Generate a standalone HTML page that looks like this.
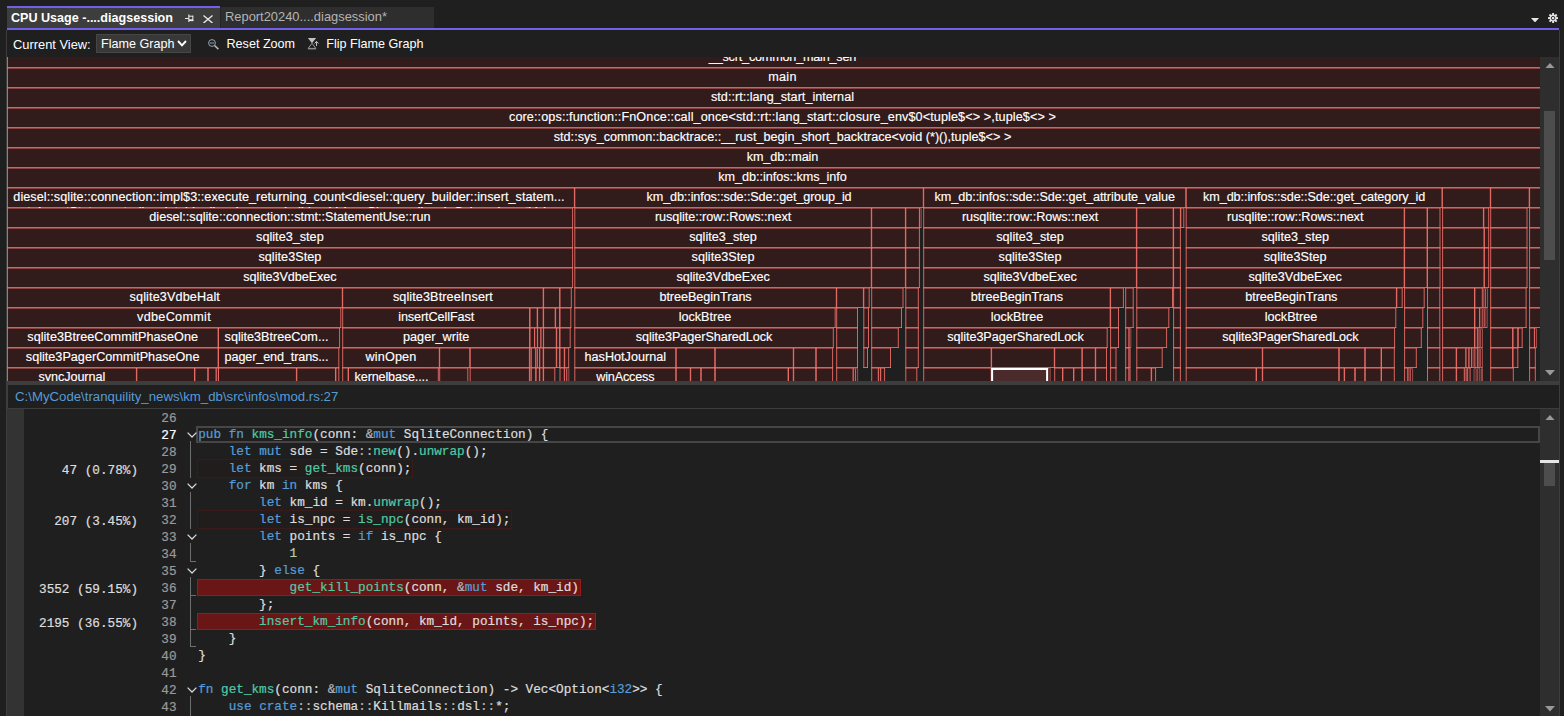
<!DOCTYPE html>
<html><head><meta charset="utf-8"><title>CPU Usage</title>
<style>
html,body{margin:0;padding:0;background:#1f1f1f;}
body{width:1564px;height:716px;overflow:hidden;position:relative;font-family:"Liberation Sans",sans-serif;color:#fff;}
.abs{position:absolute}
#tabA{left:7px;top:6px;width:213px;height:22px;background:#3d3d3d;border-top:2px solid #7160e8;box-sizing:border-box;}
#tabA span{position:absolute;left:4px;top:2.7px;font-weight:bold;font-size:12.57px;color:#fff;white-space:nowrap}
#tabB{left:220px;top:7px;width:214px;height:21px;background:#2e2e2e;border-left:1px solid #252525;box-sizing:border-box}
#tabB span{position:absolute;left:4px;top:2px;font-size:12.9px;color:#b4b4b4;white-space:nowrap}
#purple{left:7px;top:28px;width:1552px;height:2px;background:#7160e8}
#lborder{left:6px;top:30px;width:1px;height:686px;background:#3d3d3d}
#rborder{left:1559px;top:30px;width:1px;height:686px;background:#3d3d3d}
.tb{position:absolute;top:37.2px;font-size:12.6px;color:#fff;white-space:nowrap;line-height:15px}
#combo{left:96px;top:34px;width:95px;height:19px;background:#383838;border:1px solid #464646;box-sizing:border-box}
#flamewrap{left:7px;top:57px;width:1533px;height:324px;overflow:hidden;background:#1f1f1f}
.flame{position:absolute;left:0;top:0}
.fl{-webkit-text-stroke:0.15px #fff;position:absolute;height:20px;line-height:18px;font-size:12.65px;color:#fff;text-align:center;white-space:nowrap;overflow:hidden}
.fl.tr{text-align:left;padding-left:6.3px;box-sizing:border-box}
.sbar{background:#2e2e2e}
.thumb{background:#4d4d4d}
#split{left:7px;top:381px;width:1552px;height:4px;background:#3d3d3d}
#pathbar{left:7px;top:385px;width:1552px;height:24px;background:#1f1f1f;border-bottom:1px solid #3d3d3d;border-left:1px solid #3d3d3d;box-sizing:border-box}
#pathbar span{position:absolute;left:7px;top:4px;font-size:13.22px;color:#569cd6;white-space:nowrap}
#margin{left:7px;top:409px;width:17px;height:307px;background:#333333}
.mono{font-family:"Liberation Mono",monospace;font-size:12.7px;}
.ln,.cd,.mt{-webkit-text-stroke-width:0.22px;position:absolute;margin-top:0.6px;height:17px;line-height:17px;white-space:pre;font-family:"Liberation Mono",monospace;font-size:12.7px}
.ln{left:140px;width:36.5px;text-align:right;color:#9a9a9a}
.ln.cur{color:#fff}
.cd{left:198.2px;color:#dcdcdc;margin-top:-0.4px}
.mt{margin-top:1.5px;left:20px;width:118px;text-align:right;color:#dcdcdc}
.k{color:#569cd6} .f{color:#4ec9a4} .g{color:#b4b4b4} .n{color:#b5cea8}
.hl1,.hl2{position:absolute;left:197px;height:17px;box-sizing:border-box}
.hl1{background:#221d1d;border:1.7px solid #3b1a1a;margin-top:-0.7px;height:18.4px;margin-left:0.3px}
.hl2{background:#6b1616;border:1px solid #9c1717}
#curline{left:196px;top:426px;width:1344px;height:17px;border:2px solid #464646;box-sizing:border-box}
.chev{position:absolute;left:186.5px;width:10px;height:6px;line-height:0}
.vl{position:absolute;left:190px;width:1px;background:#6e6e6e}
.hl{position:absolute;left:190px;width:6px;height:1px;background:#6e6e6e}
</style></head><body>
<div id="tabA" class="abs"><span>CPU Usage -....diagsession</span>
<svg class="abs" style="left:177px;top:6px" width="11" height="9" viewBox="184 14 11 9"><g fill="#ececec"><rect x="185" y="18" width="3.5" height="1"/><rect x="188.3" y="14.5" width="1.1" height="7.5"/><rect x="189" y="15.7" width="4.3" height="1"/><rect x="192.3" y="15.7" width="1" height="5.4"/><rect x="189" y="19.3" width="4.3" height="1.8"/></g></svg>
<svg class="abs" style="left:196px;top:6.5px" width="10" height="8.6" viewBox="0 0 10 8.6"><path d="M0.5 0.5 L9.5 8.1 M9.5 0.5 L0.5 8.1" fill="none" stroke="#ececec" stroke-width="1.25"/></svg>
</div>
<div id="tabB" class="abs"><span>Report20240....diagsession*</span></div>
<svg class="abs" style="left:1531px;top:17.8px" width="8" height="4.5" viewBox="0 0 8 4.5"><path d="M0 0 H8 L4 4.5 Z" fill="#e6e6e6"/></svg>
<svg class="abs" style="left:1548px;top:13px" width="10.2" height="10.2" viewBox="-5.1 -5.1 10.2 10.2"><g fill="#e6e6e6"><circle r="3.5"/><rect x="-0.95" y="-5.1" width="1.9" height="2.6" transform="rotate(0)"/><rect x="-0.95" y="-5.1" width="1.9" height="2.6" transform="rotate(45)"/><rect x="-0.95" y="-5.1" width="1.9" height="2.6" transform="rotate(90)"/><rect x="-0.95" y="-5.1" width="1.9" height="2.6" transform="rotate(135)"/><rect x="-0.95" y="-5.1" width="1.9" height="2.6" transform="rotate(180)"/><rect x="-0.95" y="-5.1" width="1.9" height="2.6" transform="rotate(225)"/><rect x="-0.95" y="-5.1" width="1.9" height="2.6" transform="rotate(270)"/><rect x="-0.95" y="-5.1" width="1.9" height="2.6" transform="rotate(315)"/></g><circle r="1.75" fill="none" stroke="#1f1f1f" stroke-width="0.9"/></svg>
<div id="purple" class="abs"></div>
<div id="lborder" class="abs"></div>
<div id="rborder" class="abs"></div>
<div class="tb" style="left:13px;font-size:12.87px">Current View:</div>
<div id="combo" class="abs"><span class="tb" style="left:4px;top:2.2px">Flame Graph</span>
<svg class="abs" style="left:80px;top:5px" width="10" height="7" viewBox="0 0 10 7"><path d="M1 1 L5 5.3 L9 1" fill="none" stroke="#fff" stroke-width="1.9"/></svg></div>
<svg class="abs" style="left:207.2px;top:37.6px" width="13" height="13" viewBox="0 0 13 13"><circle cx="5" cy="5" r="3.4" fill="none" stroke="#a8a8a8" stroke-width="0.95"/><path d="M7.5 7.5 L11.4 11.2" stroke="#b4b4b4" stroke-width="1.6"/><path d="M2.9 5 H7.1" stroke="#5aa0e0" stroke-width="1.1"/></svg>
<div class="tb" style="left:226.5px">Reset Zoom</div>
<svg class="abs" style="left:307px;top:37px" width="13" height="13" viewBox="0 0 13 13"><path d="M0.9 0.9 H9.1 L5 6.2 Z" fill="#c2c2c2"/><path d="M5 6.3 L1.3 11.2 M5 6.3 L8.7 11.2" fill="none" stroke="#9c9c9c" stroke-width="1"/><rect x="0.9" y="10.9" width="8.2" height="1.5" fill="#8c8c8c"/><path d="M9.5 9 V4.5 M7.6 6.5 L9.5 4.4 L11.5 6.5" fill="none" stroke="#c2c2c2" stroke-width="1"/></svg>
<div class="tb" style="left:326.3px">Flip Flame Graph</div>

<div id="flamewrap" class="abs">
<svg class="flame" width="1533" height="324" viewBox="7 57 1533 324">
<rect x="0" y="0" width="1600" height="800" fill="#1f1f1f"/>
<g fill="#321b1b" stroke="none"><rect x="7.00" y="48" width="1551.30" height="20"/><rect x="7.00" y="68" width="1551.30" height="20"/><rect x="7.00" y="88" width="1551.30" height="20"/><rect x="7.00" y="108" width="1551.30" height="20"/><rect x="7.00" y="128" width="1551.30" height="20"/><rect x="7.00" y="148" width="1551.30" height="20"/><rect x="7.00" y="168" width="1551.30" height="20"/><rect x="7.00" y="188" width="567.90" height="20"/><rect x="574.30" y="188" width="349.50" height="20"/><rect x="923.20" y="188" width="263.10" height="20"/><rect x="1185.70" y="188" width="256.80" height="20"/><rect x="1441.90" y="188" width="48.90" height="20"/><rect x="1490.20" y="188" width="39.50" height="20"/><rect x="1529.10" y="188" width="29.20" height="20"/><rect x="7.00" y="208" width="566.10" height="20"/><rect x="574.30" y="208" width="297.50" height="20"/><rect x="871.20" y="208" width="34.70" height="20"/><rect x="905.30" y="208" width="14.60" height="20"/><rect x="923.20" y="208" width="213.70" height="20"/><rect x="1136.30" y="208" width="37.40" height="20"/><rect x="1173.10" y="208" width="7.80" height="20"/><rect x="1185.70" y="208" width="219.00" height="20"/><rect x="1404.10" y="208" width="23.50" height="20"/><rect x="1427.00" y="208" width="13.50" height="20"/><rect x="1442.10" y="208" width="41.80" height="20"/><rect x="1483.30" y="208" width="5.90" height="20"/><rect x="1490.20" y="208" width="37.30" height="20"/><rect x="1529.10" y="208" width="29.20" height="20"/><rect x="7.00" y="228" width="566.10" height="20"/><rect x="574.30" y="228" width="297.50" height="20"/><rect x="871.20" y="228" width="34.70" height="20"/><rect x="905.30" y="228" width="14.60" height="20"/><rect x="923.20" y="228" width="213.70" height="20"/><rect x="1136.30" y="228" width="37.40" height="20"/><rect x="1173.10" y="228" width="7.80" height="20"/><rect x="1185.70" y="228" width="219.00" height="20"/><rect x="1404.10" y="228" width="23.50" height="20"/><rect x="1427.00" y="228" width="13.50" height="20"/><rect x="1442.10" y="228" width="42.40" height="20"/><rect x="1483.90" y="228" width="5.30" height="20"/><rect x="1490.20" y="228" width="37.30" height="20"/><rect x="1529.10" y="228" width="29.20" height="20"/><rect x="7.00" y="248" width="566.10" height="20"/><rect x="574.30" y="248" width="297.50" height="20"/><rect x="871.20" y="248" width="34.70" height="20"/><rect x="905.30" y="248" width="14.60" height="20"/><rect x="923.20" y="248" width="213.70" height="20"/><rect x="1136.30" y="248" width="37.40" height="20"/><rect x="1173.10" y="248" width="7.80" height="20"/><rect x="1185.70" y="248" width="219.00" height="20"/><rect x="1404.10" y="248" width="23.50" height="20"/><rect x="1427.00" y="248" width="13.50" height="20"/><rect x="1442.10" y="248" width="42.40" height="20"/><rect x="1483.90" y="248" width="5.30" height="20"/><rect x="1490.20" y="248" width="37.30" height="20"/><rect x="1529.10" y="248" width="29.20" height="20"/><rect x="7.00" y="268" width="566.10" height="20"/><rect x="574.30" y="268" width="297.50" height="20"/><rect x="871.20" y="268" width="34.70" height="20"/><rect x="905.30" y="268" width="14.60" height="20"/><rect x="923.20" y="268" width="213.70" height="20"/><rect x="1136.30" y="268" width="37.40" height="20"/><rect x="1173.10" y="268" width="7.80" height="20"/><rect x="1185.70" y="268" width="219.00" height="20"/><rect x="1404.10" y="268" width="23.50" height="20"/><rect x="1427.00" y="268" width="13.50" height="20"/><rect x="1442.10" y="268" width="42.40" height="20"/><rect x="1483.90" y="268" width="5.30" height="20"/><rect x="1490.20" y="268" width="37.30" height="20"/><rect x="1529.10" y="268" width="29.20" height="20"/><rect x="919.30" y="208" width="2.20" height="20"/><rect x="1180.30" y="208" width="4.00" height="20"/><rect x="7.00" y="288" width="335.80" height="20"/><rect x="342.20" y="288" width="201.50" height="20"/><rect x="543.10" y="288" width="17.00" height="20"/><rect x="559.50" y="288" width="12.30" height="20"/><rect x="574.30" y="288" width="262.50" height="20"/><rect x="836.20" y="288" width="27.70" height="20"/><rect x="863.30" y="288" width="6.40" height="20"/><rect x="871.20" y="288" width="32.30" height="20"/><rect x="905.30" y="288" width="13.50" height="20"/><rect x="923.20" y="288" width="187.50" height="20"/><rect x="1110.10" y="288" width="13.80" height="20"/><rect x="1125.20" y="288" width="8.50" height="20"/><rect x="1136.30" y="288" width="36.70" height="20"/><rect x="1173.10" y="288" width="7.80" height="20"/><rect x="1185.70" y="288" width="211.20" height="20"/><rect x="1396.30" y="288" width="6.40" height="20"/><rect x="1404.10" y="288" width="20.60" height="20"/><rect x="1427.00" y="288" width="13.30" height="20"/><rect x="1442.10" y="288" width="32.90" height="20"/><rect x="1474.40" y="288" width="8.40" height="20"/><rect x="1483.00" y="288" width="2.50" height="20"/><rect x="1485.10" y="288" width="2.80" height="20"/><rect x="1490.20" y="288" width="36.40" height="20"/><rect x="1529.10" y="288" width="29.20" height="20"/><rect x="7.00" y="308" width="334.30" height="20"/><rect x="342.20" y="308" width="187.90" height="20"/><rect x="529.50" y="308" width="8.20" height="20"/><rect x="537.10" y="308" width="6.60" height="20"/><rect x="543.10" y="308" width="12.60" height="20"/><rect x="555.10" y="308" width="5.00" height="20"/><rect x="559.50" y="308" width="11.80" height="20"/><rect x="574.30" y="308" width="261.40" height="20"/><rect x="836.20" y="308" width="21.80" height="20"/><rect x="863.30" y="308" width="5.70" height="20"/><rect x="871.20" y="308" width="30.80" height="20"/><rect x="905.30" y="308" width="13.50" height="20"/><rect x="923.20" y="308" width="187.50" height="20"/><rect x="1110.10" y="308" width="8.90" height="20"/><rect x="1125.20" y="308" width="8.50" height="20"/><rect x="1136.30" y="308" width="33.00" height="20"/><rect x="1173.10" y="308" width="7.80" height="20"/><rect x="1185.70" y="308" width="210.60" height="20"/><rect x="1404.10" y="308" width="19.20" height="20"/><rect x="1427.00" y="308" width="13.30" height="20"/><rect x="1442.10" y="308" width="32.90" height="20"/><rect x="1474.40" y="308" width="5.70" height="20"/><rect x="1479.50" y="308" width="3.00" height="20"/><rect x="1482.50" y="308" width="2.20" height="20"/><rect x="1484.70" y="308" width="2.80" height="20"/><rect x="1490.20" y="308" width="36.40" height="20"/><rect x="1529.10" y="308" width="29.20" height="20"/><rect x="7.00" y="328" width="211.60" height="20"/><rect x="218.00" y="328" width="122.10" height="20"/><rect x="342.20" y="328" width="187.90" height="20"/><rect x="529.50" y="328" width="5.50" height="20"/><rect x="534.40" y="328" width="3.30" height="20"/><rect x="537.10" y="328" width="4.20" height="20"/><rect x="540.70" y="328" width="3.00" height="20"/><rect x="543.10" y="328" width="13.70" height="20"/><rect x="556.20" y="328" width="3.90" height="20"/><rect x="559.50" y="328" width="11.20" height="20"/><rect x="574.30" y="328" width="259.50" height="20"/><rect x="836.20" y="328" width="21.80" height="20"/><rect x="863.30" y="328" width="5.70" height="20"/><rect x="871.20" y="328" width="27.60" height="20"/><rect x="905.30" y="328" width="13.50" height="20"/><rect x="923.20" y="328" width="184.50" height="20"/><rect x="1110.10" y="328" width="8.90" height="20"/><rect x="1125.20" y="328" width="4.20" height="20"/><rect x="1128.80" y="328" width="2.40" height="20"/><rect x="1136.30" y="328" width="30.80" height="20"/><rect x="1173.10" y="328" width="7.80" height="20"/><rect x="1185.70" y="328" width="209.40" height="20"/><rect x="1404.10" y="328" width="17.70" height="20"/><rect x="1427.00" y="328" width="13.30" height="20"/><rect x="1442.10" y="328" width="32.90" height="20"/><rect x="1474.40" y="328" width="3.50" height="20"/><rect x="1477.90" y="328" width="2.20" height="20"/><rect x="1480.30" y="328" width="2.50" height="20"/><rect x="1490.20" y="328" width="22.90" height="20"/><rect x="1512.50" y="328" width="5.80" height="20"/><rect x="1517.70" y="328" width="5.00" height="20"/><rect x="1529.10" y="328" width="5.80" height="20"/><rect x="1534.30" y="328" width="2.60" height="20"/><rect x="7.00" y="348" width="211.60" height="20"/><rect x="218.00" y="348" width="121.30" height="20"/><rect x="342.20" y="348" width="97.60" height="20"/><rect x="439.20" y="348" width="31.10" height="20"/><rect x="469.70" y="348" width="60.40" height="20"/><rect x="529.00" y="348" width="2.30" height="20"/><rect x="530.70" y="348" width="5.50" height="20"/><rect x="535.60" y="348" width="2.10" height="20"/><rect x="537.10" y="348" width="2.80" height="20"/><rect x="539.30" y="348" width="4.40" height="20"/><rect x="543.10" y="348" width="13.70" height="20"/><rect x="556.20" y="348" width="3.90" height="20"/><rect x="559.50" y="348" width="5.30" height="20"/><rect x="564.20" y="348" width="5.00" height="20"/><rect x="574.30" y="348" width="102.00" height="20"/><rect x="675.70" y="348" width="39.60" height="20"/><rect x="714.70" y="348" width="79.10" height="20"/><rect x="793.20" y="348" width="23.10" height="20"/><rect x="815.70" y="348" width="17.40" height="20"/><rect x="836.20" y="348" width="21.80" height="20"/><rect x="863.30" y="348" width="4.70" height="20"/><rect x="871.20" y="348" width="19.80" height="20"/><rect x="905.30" y="348" width="13.50" height="20"/><rect x="923.20" y="348" width="68.50" height="20"/><rect x="991.10" y="348" width="63.70" height="20"/><rect x="1054.20" y="348" width="28.20" height="20"/><rect x="1081.80" y="348" width="14.00" height="20"/><rect x="1095.20" y="348" width="11.80" height="20"/><rect x="1110.10" y="348" width="6.40" height="20"/><rect x="1125.20" y="348" width="4.20" height="20"/><rect x="1128.80" y="348" width="1.90" height="20"/><rect x="1136.30" y="348" width="26.40" height="20"/><rect x="1173.10" y="348" width="7.80" height="20"/><rect x="1185.70" y="348" width="77.10" height="20"/><rect x="1262.20" y="348" width="77.10" height="20"/><rect x="1338.70" y="348" width="26.60" height="20"/><rect x="1364.70" y="348" width="16.90" height="20"/><rect x="1381.00" y="348" width="13.80" height="20"/><rect x="1404.10" y="348" width="12.70" height="20"/><rect x="1427.00" y="348" width="13.30" height="20"/><rect x="1442.10" y="348" width="14.60" height="20"/><rect x="1456.10" y="348" width="10.20" height="20"/><rect x="1465.70" y="348" width="3.40" height="20"/><rect x="1468.50" y="348" width="3.60" height="20"/><rect x="1471.50" y="348" width="2.80" height="20"/><rect x="1474.40" y="348" width="3.50" height="20"/><rect x="1477.90" y="348" width="2.20" height="20"/><rect x="1480.30" y="348" width="2.50" height="20"/><rect x="1490.20" y="348" width="22.90" height="20"/><rect x="1512.50" y="348" width="5.80" height="20"/><rect x="1529.10" y="348" width="6.70" height="20"/><rect x="7.00" y="368" width="129.90" height="20"/><rect x="136.30" y="368" width="58.70" height="20"/><rect x="194.40" y="368" width="13.90" height="20"/><rect x="207.70" y="368" width="8.90" height="20"/><rect x="216.00" y="368" width="2.60" height="20"/><rect x="218.00" y="368" width="78.90" height="20"/><rect x="296.30" y="368" width="39.70" height="20"/><rect x="335.40" y="368" width="3.90" height="20"/><rect x="342.20" y="368" width="6.40" height="20"/><rect x="348.00" y="368" width="90.80" height="20"/><rect x="439.20" y="368" width="29.10" height="20"/><rect x="469.70" y="368" width="60.40" height="20"/><rect x="529.00" y="368" width="2.30" height="20"/><rect x="530.70" y="368" width="5.50" height="20"/><rect x="535.60" y="368" width="4.30" height="20"/><rect x="539.30" y="368" width="4.40" height="20"/><rect x="543.10" y="368" width="12.20" height="20"/><rect x="559.50" y="368" width="5.30" height="20"/><rect x="564.20" y="368" width="2.80" height="20"/><rect x="566.40" y="368" width="2.80" height="20"/><rect x="574.30" y="368" width="102.00" height="20"/><rect x="675.70" y="368" width="15.10" height="20"/><rect x="690.20" y="368" width="11.10" height="20"/><rect x="700.70" y="368" width="14.60" height="20"/><rect x="714.70" y="368" width="73.90" height="20"/><rect x="788.00" y="368" width="5.80" height="20"/><rect x="793.20" y="368" width="23.10" height="20"/><rect x="815.70" y="368" width="17.40" height="20"/><rect x="836.20" y="368" width="17.40" height="20"/><rect x="853.00" y="368" width="2.80" height="20"/><rect x="855.20" y="368" width="2.80" height="20"/><rect x="871.20" y="368" width="7.60" height="20"/><rect x="878.20" y="368" width="2.60" height="20"/><rect x="880.20" y="368" width="4.90" height="20"/><rect x="905.30" y="368" width="12.00" height="20"/><rect x="923.20" y="368" width="68.50" height="20"/><rect x="1047.50" y="368" width="3.00" height="20"/><rect x="1054.20" y="368" width="8.80" height="20"/><rect x="1062.40" y="368" width="11.60" height="20"/><rect x="1073.40" y="368" width="9.00" height="20"/><rect x="1081.80" y="368" width="14.00" height="20"/><rect x="1095.20" y="368" width="11.80" height="20"/><rect x="1110.10" y="368" width="6.40" height="20"/><rect x="1125.20" y="368" width="4.20" height="20"/><rect x="1128.80" y="368" width="1.90" height="20"/><rect x="1136.30" y="368" width="15.40" height="20"/><rect x="1151.10" y="368" width="5.00" height="20"/><rect x="1173.10" y="368" width="7.80" height="20"/><rect x="1185.70" y="368" width="70.90" height="20"/><rect x="1256.00" y="368" width="6.80" height="20"/><rect x="1262.20" y="368" width="77.10" height="20"/><rect x="1338.70" y="368" width="6.00" height="20"/><rect x="1344.10" y="368" width="11.20" height="20"/><rect x="1354.70" y="368" width="10.60" height="20"/><rect x="1364.70" y="368" width="16.90" height="20"/><rect x="1381.00" y="368" width="13.80" height="20"/><rect x="1404.10" y="368" width="4.20" height="20"/><rect x="1407.70" y="368" width="2.80" height="20"/><rect x="1409.90" y="368" width="3.10" height="20"/><rect x="1427.00" y="368" width="13.30" height="20"/><rect x="1442.10" y="368" width="14.60" height="20"/><rect x="1456.10" y="368" width="8.70" height="20"/><rect x="1464.70" y="368" width="2.20" height="20"/><rect x="1467.10" y="368" width="3.50" height="20"/><rect x="1473.70" y="368" width="2.80" height="20"/><rect x="1477.30" y="368" width="2.80" height="20"/><rect x="1481.00" y="368" width="1.80" height="20"/><rect x="1490.20" y="368" width="23.60" height="20"/><rect x="1529.10" y="368" width="6.70" height="20"/></g>
<path fill="none" stroke="#f6736e" stroke-opacity="0.83" stroke-width="1" d="M7.00 67.5H1558.30M7.00 87.5H1558.30M7.00 107.5H1558.30M7.00 127.5H1558.30M7.00 147.5H1558.30M7.00 167.5H1558.30M7.00 187.5H1558.30M7.00 207.5H574.90M574.30 207.5H923.80M923.20 207.5H1186.30M1185.70 207.5H1442.50M1441.90 207.5H1490.80M1490.20 207.5H1529.70M1529.10 207.5H1558.30M7.00 227.5H573.10M574.30 227.5H871.80M871.20 227.5H905.90M905.30 227.5H919.90M923.20 227.5H1136.90M1136.30 227.5H1173.70M1173.10 227.5H1180.90M1185.70 227.5H1404.70M1404.10 227.5H1427.60M1427.00 227.5H1440.50M1442.10 227.5H1483.90M1483.30 227.5H1489.20M1490.20 227.5H1527.50M1529.10 227.5H1558.30M7.00 247.5H573.10M574.30 247.5H871.80M871.20 247.5H905.90M905.30 247.5H919.90M923.20 247.5H1136.90M1136.30 247.5H1173.70M1173.10 247.5H1180.90M1185.70 247.5H1404.70M1404.10 247.5H1427.60M1427.00 247.5H1440.50M1442.10 247.5H1484.50M1483.90 247.5H1489.20M1490.20 247.5H1527.50M1529.10 247.5H1558.30M7.00 267.5H573.10M574.30 267.5H871.80M871.20 267.5H905.90M905.30 267.5H919.90M923.20 267.5H1136.90M1136.30 267.5H1173.70M1173.10 267.5H1180.90M1185.70 267.5H1404.70M1404.10 267.5H1427.60M1427.00 267.5H1440.50M1442.10 267.5H1484.50M1483.90 267.5H1489.20M1490.20 267.5H1527.50M1529.10 267.5H1558.30M7.00 287.5H573.10M574.30 287.5H871.80M871.20 287.5H905.90M905.30 287.5H919.90M923.20 287.5H1136.90M1136.30 287.5H1173.70M1173.10 287.5H1180.90M1185.70 287.5H1404.70M1404.10 287.5H1427.60M1427.00 287.5H1440.50M1442.10 287.5H1484.50M1483.90 287.5H1489.20M1490.20 287.5H1527.50M1529.10 287.5H1558.30M919.30 227.5H921.50M1180.30 227.5H1184.30M7.00 307.5H342.80M342.20 307.5H543.70M543.10 307.5H560.10M559.50 307.5H571.80M574.30 307.5H836.80M836.20 307.5H863.90M863.30 307.5H869.70M871.20 307.5H903.50M905.30 307.5H918.80M923.20 307.5H1110.70M1110.10 307.5H1123.90M1125.20 307.5H1133.70M1136.30 307.5H1173.00M1173.10 307.5H1180.90M1185.70 307.5H1396.90M1396.30 307.5H1402.70M1404.10 307.5H1424.70M1427.00 307.5H1440.30M1442.10 307.5H1475.00M1474.40 307.5H1482.80M1483.00 307.5H1485.50M1485.10 307.5H1487.90M1490.20 307.5H1526.60M1529.10 307.5H1558.30M7.00 327.5H341.30M342.20 327.5H530.10M529.50 327.5H537.70M537.10 327.5H543.70M543.10 327.5H555.70M555.10 327.5H560.10M559.50 327.5H571.30M574.30 327.5H835.70M836.20 327.5H858.00M863.30 327.5H869.00M871.20 327.5H902.00M905.30 327.5H918.80M923.20 327.5H1110.70M1110.10 327.5H1119.00M1125.20 327.5H1133.70M1136.30 327.5H1169.30M1173.10 327.5H1180.90M1185.70 327.5H1396.30M1404.10 327.5H1423.30M1427.00 327.5H1440.30M1442.10 327.5H1475.00M1474.40 327.5H1480.10M1479.50 327.5H1482.50M1482.50 327.5H1484.70M1484.70 327.5H1487.50M1490.20 327.5H1526.60M1529.10 327.5H1558.30M7.00 347.5H218.60M218.00 347.5H340.10M342.20 347.5H530.10M529.50 347.5H535.00M534.40 347.5H537.70M537.10 347.5H541.30M540.70 347.5H543.70M543.10 347.5H556.80M556.20 347.5H560.10M559.50 347.5H570.70M574.30 347.5H833.80M836.20 347.5H858.00M863.30 347.5H869.00M871.20 347.5H898.80M905.30 347.5H918.80M923.20 347.5H1107.70M1110.10 347.5H1119.00M1125.20 347.5H1129.40M1128.80 347.5H1131.20M1136.30 347.5H1167.10M1173.10 347.5H1180.90M1185.70 347.5H1395.10M1404.10 347.5H1421.80M1427.00 347.5H1440.30M1442.10 347.5H1475.00M1474.40 347.5H1477.90M1477.90 347.5H1480.10M1480.30 347.5H1482.80M1490.20 347.5H1513.10M1512.50 347.5H1518.30M1517.70 347.5H1522.70M1529.10 347.5H1534.90M1534.30 347.5H1536.90M7.00 367.5H218.60M218.00 367.5H339.30M342.20 367.5H439.80M439.20 367.5H470.30M469.70 367.5H530.10M529.00 367.5H531.30M530.70 367.5H536.20M535.60 367.5H537.70M537.10 367.5H539.90M539.30 367.5H543.70M543.10 367.5H556.80M556.20 367.5H560.10M559.50 367.5H564.80M564.20 367.5H569.20M574.30 367.5H676.30M675.70 367.5H715.30M714.70 367.5H793.80M793.20 367.5H816.30M815.70 367.5H833.10M836.20 367.5H858.00M863.30 367.5H868.00M871.20 367.5H891.00M905.30 367.5H918.80M923.20 367.5H991.70M991.10 367.5H1054.80M1054.20 367.5H1082.40M1081.80 367.5H1095.80M1095.20 367.5H1107.00M1110.10 367.5H1116.50M1125.20 367.5H1129.40M1128.80 367.5H1130.70M1136.30 367.5H1162.70M1173.10 367.5H1180.90M1185.70 367.5H1262.80M1262.20 367.5H1339.30M1338.70 367.5H1365.30M1364.70 367.5H1381.60M1381.00 367.5H1394.80M1404.10 367.5H1416.80M1427.00 367.5H1440.30M1442.10 367.5H1456.70M1456.10 367.5H1466.30M1465.70 367.5H1469.10M1468.50 367.5H1472.10M1471.50 367.5H1474.30M1474.40 367.5H1477.90M1477.90 367.5H1480.10M1480.30 367.5H1482.80M1490.20 367.5H1513.10M1512.50 367.5H1518.30M1529.10 367.5H1535.80M7.00 387.5H136.90M136.30 387.5H195.00M194.40 387.5H208.30M207.70 387.5H216.60M216.00 387.5H218.60M218.00 387.5H296.90M296.30 387.5H336.00M335.40 387.5H339.30M342.20 387.5H348.60M348.00 387.5H438.80M439.20 387.5H468.30M469.70 387.5H530.10M529.00 387.5H531.30M530.70 387.5H536.20M535.60 387.5H539.90M539.30 387.5H543.70M543.10 387.5H555.30M559.50 387.5H564.80M564.20 387.5H567.00M566.40 387.5H569.20M574.30 387.5H676.30M675.70 387.5H690.80M690.20 387.5H701.30M700.70 387.5H715.30M714.70 387.5H788.60M788.00 387.5H793.80M793.20 387.5H816.30M815.70 387.5H833.10M836.20 387.5H853.60M853.00 387.5H855.80M855.20 387.5H858.00M871.20 387.5H878.80M878.20 387.5H880.80M880.20 387.5H885.10M905.30 387.5H917.30M923.20 387.5H991.70M1047.50 387.5H1050.50M1054.20 387.5H1063.00M1062.40 387.5H1074.00M1073.40 387.5H1082.40M1081.80 387.5H1095.80M1095.20 387.5H1107.00M1110.10 387.5H1116.50M1125.20 387.5H1129.40M1128.80 387.5H1130.70M1136.30 387.5H1151.70M1151.10 387.5H1156.10M1173.10 387.5H1180.90M1185.70 387.5H1256.60M1256.00 387.5H1262.80M1262.20 387.5H1339.30M1338.70 387.5H1344.70M1344.10 387.5H1355.30M1354.70 387.5H1365.30M1364.70 387.5H1381.60M1381.00 387.5H1394.80M1404.10 387.5H1408.30M1407.70 387.5H1410.50M1409.90 387.5H1413.00M1427.00 387.5H1440.30M1442.10 387.5H1456.70M1456.10 387.5H1464.80M1464.70 387.5H1466.90M1467.10 387.5H1470.60M1473.70 387.5H1476.50M1477.30 387.5H1480.10M1481.00 387.5H1482.80M1490.20 387.5H1513.80M1529.10 387.5H1535.80"/>
<path fill="none" stroke="#f6736e" stroke-opacity="0.45" stroke-width="1" d="M7.00 48.5H1558.30M7.00 68.5H1558.30M7.00 88.5H1558.30M7.00 108.5H1558.30M7.00 128.5H1558.30M7.00 148.5H1558.30M7.00 168.5H1558.30M7.00 188.5H574.90M574.30 188.5H923.80M923.20 188.5H1186.30M1185.70 188.5H1442.50M1441.90 188.5H1490.80M1490.20 188.5H1529.70M1529.10 188.5H1558.30M7.00 208.5H573.10M574.30 208.5H871.80M871.20 208.5H905.90M905.30 208.5H919.90M923.20 208.5H1136.90M1136.30 208.5H1173.70M1173.10 208.5H1180.90M1185.70 208.5H1404.70M1404.10 208.5H1427.60M1427.00 208.5H1440.50M1442.10 208.5H1483.90M1483.30 208.5H1489.20M1490.20 208.5H1527.50M1529.10 208.5H1558.30M7.00 228.5H573.10M574.30 228.5H871.80M871.20 228.5H905.90M905.30 228.5H919.90M923.20 228.5H1136.90M1136.30 228.5H1173.70M1173.10 228.5H1180.90M1185.70 228.5H1404.70M1404.10 228.5H1427.60M1427.00 228.5H1440.50M1442.10 228.5H1484.50M1483.90 228.5H1489.20M1490.20 228.5H1527.50M1529.10 228.5H1558.30M7.00 248.5H573.10M574.30 248.5H871.80M871.20 248.5H905.90M905.30 248.5H919.90M923.20 248.5H1136.90M1136.30 248.5H1173.70M1173.10 248.5H1180.90M1185.70 248.5H1404.70M1404.10 248.5H1427.60M1427.00 248.5H1440.50M1442.10 248.5H1484.50M1483.90 248.5H1489.20M1490.20 248.5H1527.50M1529.10 248.5H1558.30M7.00 268.5H573.10M574.30 268.5H871.80M871.20 268.5H905.90M905.30 268.5H919.90M923.20 268.5H1136.90M1136.30 268.5H1173.70M1173.10 268.5H1180.90M1185.70 268.5H1404.70M1404.10 268.5H1427.60M1427.00 268.5H1440.50M1442.10 268.5H1484.50M1483.90 268.5H1489.20M1490.20 268.5H1527.50M1529.10 268.5H1558.30M919.30 208.5H921.50M1180.30 208.5H1184.30M7.00 288.5H342.80M342.20 288.5H543.70M543.10 288.5H560.10M559.50 288.5H571.80M574.30 288.5H836.80M836.20 288.5H863.90M863.30 288.5H869.70M871.20 288.5H903.50M905.30 288.5H918.80M923.20 288.5H1110.70M1110.10 288.5H1123.90M1125.20 288.5H1133.70M1136.30 288.5H1173.00M1173.10 288.5H1180.90M1185.70 288.5H1396.90M1396.30 288.5H1402.70M1404.10 288.5H1424.70M1427.00 288.5H1440.30M1442.10 288.5H1475.00M1474.40 288.5H1482.80M1483.00 288.5H1485.50M1485.10 288.5H1487.90M1490.20 288.5H1526.60M1529.10 288.5H1558.30M7.00 308.5H341.30M342.20 308.5H530.10M529.50 308.5H537.70M537.10 308.5H543.70M543.10 308.5H555.70M555.10 308.5H560.10M559.50 308.5H571.30M574.30 308.5H835.70M836.20 308.5H858.00M863.30 308.5H869.00M871.20 308.5H902.00M905.30 308.5H918.80M923.20 308.5H1110.70M1110.10 308.5H1119.00M1125.20 308.5H1133.70M1136.30 308.5H1169.30M1173.10 308.5H1180.90M1185.70 308.5H1396.30M1404.10 308.5H1423.30M1427.00 308.5H1440.30M1442.10 308.5H1475.00M1474.40 308.5H1480.10M1479.50 308.5H1482.50M1482.50 308.5H1484.70M1484.70 308.5H1487.50M1490.20 308.5H1526.60M1529.10 308.5H1558.30M7.00 328.5H218.60M218.00 328.5H340.10M342.20 328.5H530.10M529.50 328.5H535.00M534.40 328.5H537.70M537.10 328.5H541.30M540.70 328.5H543.70M543.10 328.5H556.80M556.20 328.5H560.10M559.50 328.5H570.70M574.30 328.5H833.80M836.20 328.5H858.00M863.30 328.5H869.00M871.20 328.5H898.80M905.30 328.5H918.80M923.20 328.5H1107.70M1110.10 328.5H1119.00M1125.20 328.5H1129.40M1128.80 328.5H1131.20M1136.30 328.5H1167.10M1173.10 328.5H1180.90M1185.70 328.5H1395.10M1404.10 328.5H1421.80M1427.00 328.5H1440.30M1442.10 328.5H1475.00M1474.40 328.5H1477.90M1477.90 328.5H1480.10M1480.30 328.5H1482.80M1490.20 328.5H1513.10M1512.50 328.5H1518.30M1517.70 328.5H1522.70M1529.10 328.5H1534.90M1534.30 328.5H1536.90M7.00 348.5H218.60M218.00 348.5H339.30M342.20 348.5H439.80M439.20 348.5H470.30M469.70 348.5H530.10M529.00 348.5H531.30M530.70 348.5H536.20M535.60 348.5H537.70M537.10 348.5H539.90M539.30 348.5H543.70M543.10 348.5H556.80M556.20 348.5H560.10M559.50 348.5H564.80M564.20 348.5H569.20M574.30 348.5H676.30M675.70 348.5H715.30M714.70 348.5H793.80M793.20 348.5H816.30M815.70 348.5H833.10M836.20 348.5H858.00M863.30 348.5H868.00M871.20 348.5H891.00M905.30 348.5H918.80M923.20 348.5H991.70M991.10 348.5H1054.80M1054.20 348.5H1082.40M1081.80 348.5H1095.80M1095.20 348.5H1107.00M1110.10 348.5H1116.50M1125.20 348.5H1129.40M1128.80 348.5H1130.70M1136.30 348.5H1162.70M1173.10 348.5H1180.90M1185.70 348.5H1262.80M1262.20 348.5H1339.30M1338.70 348.5H1365.30M1364.70 348.5H1381.60M1381.00 348.5H1394.80M1404.10 348.5H1416.80M1427.00 348.5H1440.30M1442.10 348.5H1456.70M1456.10 348.5H1466.30M1465.70 348.5H1469.10M1468.50 348.5H1472.10M1471.50 348.5H1474.30M1474.40 348.5H1477.90M1477.90 348.5H1480.10M1480.30 348.5H1482.80M1490.20 348.5H1513.10M1512.50 348.5H1518.30M1529.10 348.5H1535.80M7.00 368.5H136.90M136.30 368.5H195.00M194.40 368.5H208.30M207.70 368.5H216.60M216.00 368.5H218.60M218.00 368.5H296.90M296.30 368.5H336.00M335.40 368.5H339.30M342.20 368.5H348.60M348.00 368.5H438.80M439.20 368.5H468.30M469.70 368.5H530.10M529.00 368.5H531.30M530.70 368.5H536.20M535.60 368.5H539.90M539.30 368.5H543.70M543.10 368.5H555.30M559.50 368.5H564.80M564.20 368.5H567.00M566.40 368.5H569.20M574.30 368.5H676.30M675.70 368.5H690.80M690.20 368.5H701.30M700.70 368.5H715.30M714.70 368.5H788.60M788.00 368.5H793.80M793.20 368.5H816.30M815.70 368.5H833.10M836.20 368.5H853.60M853.00 368.5H855.80M855.20 368.5H858.00M871.20 368.5H878.80M878.20 368.5H880.80M880.20 368.5H885.10M905.30 368.5H917.30M923.20 368.5H991.70M1047.50 368.5H1050.50M1054.20 368.5H1063.00M1062.40 368.5H1074.00M1073.40 368.5H1082.40M1081.80 368.5H1095.80M1095.20 368.5H1107.00M1110.10 368.5H1116.50M1125.20 368.5H1129.40M1128.80 368.5H1130.70M1136.30 368.5H1151.70M1151.10 368.5H1156.10M1173.10 368.5H1180.90M1185.70 368.5H1256.60M1256.00 368.5H1262.80M1262.20 368.5H1339.30M1338.70 368.5H1344.70M1344.10 368.5H1355.30M1354.70 368.5H1365.30M1364.70 368.5H1381.60M1381.00 368.5H1394.80M1404.10 368.5H1408.30M1407.70 368.5H1410.50M1409.90 368.5H1413.00M1427.00 368.5H1440.30M1442.10 368.5H1456.70M1456.10 368.5H1464.80M1464.70 368.5H1466.90M1467.10 368.5H1470.60M1473.70 368.5H1476.50M1477.30 368.5H1480.10M1481.00 368.5H1482.80M1490.20 368.5H1513.80M1529.10 368.5H1535.80"/>
<g fill="none" stroke="#f6736e" stroke-opacity="0.83" stroke-width="1"><path d="M7.50 48V68M1557.80 48V68"/><path d="M7.50 68V88M1557.80 68V88"/><path d="M7.50 88V108M1557.80 88V108"/><path d="M7.50 108V128M1557.80 108V128"/><path d="M7.50 128V148M1557.80 128V148"/><path d="M7.50 148V168M1557.80 148V168"/><path d="M7.50 168V188M1557.80 168V188"/><path d="M7.50 188V208M574.40 188V208"/><path d="M574.80 188V208M923.30 188V208"/><path d="M923.70 188V208M1185.80 188V208"/><path d="M1186.20 188V208M1442.00 188V208"/><path d="M1442.40 188V208M1490.30 188V208"/><path d="M1490.70 188V208M1529.20 188V208"/><path d="M1529.60 188V208M1557.80 188V208"/><path d="M7.50 208V228M572.60 208V228"/><path d="M574.80 208V228M871.30 208V228"/><path d="M871.70 208V228M905.40 208V228"/><path d="M905.80 208V228M919.40 208V228"/><path d="M923.70 208V228M1136.40 208V228"/><path d="M1136.80 208V228M1173.20 208V228"/><path d="M1173.60 208V228M1180.40 208V228"/><path d="M1186.20 208V228M1404.20 208V228"/><path d="M1404.60 208V228M1427.10 208V228"/><path d="M1427.50 208V228M1440.00 208V228"/><path d="M1442.60 208V228M1483.40 208V228"/><path d="M1483.80 208V228M1488.70 208V228"/><path d="M1490.70 208V228M1527.00 208V228"/><path d="M1529.60 208V228M1557.80 208V228"/><path d="M7.50 228V248M572.60 228V248"/><path d="M574.80 228V248M871.30 228V248"/><path d="M871.70 228V248M905.40 228V248"/><path d="M905.80 228V248M919.40 228V248"/><path d="M923.70 228V248M1136.40 228V248"/><path d="M1136.80 228V248M1173.20 228V248"/><path d="M1173.60 228V248M1180.40 228V248"/><path d="M1186.20 228V248M1404.20 228V248"/><path d="M1404.60 228V248M1427.10 228V248"/><path d="M1427.50 228V248M1440.00 228V248"/><path d="M1442.60 228V248M1484.00 228V248"/><path d="M1484.40 228V248M1488.70 228V248"/><path d="M1490.70 228V248M1527.00 228V248"/><path d="M1529.60 228V248M1557.80 228V248"/><path d="M7.50 248V268M572.60 248V268"/><path d="M574.80 248V268M871.30 248V268"/><path d="M871.70 248V268M905.40 248V268"/><path d="M905.80 248V268M919.40 248V268"/><path d="M923.70 248V268M1136.40 248V268"/><path d="M1136.80 248V268M1173.20 248V268"/><path d="M1173.60 248V268M1180.40 248V268"/><path d="M1186.20 248V268M1404.20 248V268"/><path d="M1404.60 248V268M1427.10 248V268"/><path d="M1427.50 248V268M1440.00 248V268"/><path d="M1442.60 248V268M1484.00 248V268"/><path d="M1484.40 248V268M1488.70 248V268"/><path d="M1490.70 248V268M1527.00 248V268"/><path d="M1529.60 248V268M1557.80 248V268"/><path d="M7.50 268V288M572.60 268V288"/><path d="M574.80 268V288M871.30 268V288"/><path d="M871.70 268V288M905.40 268V288"/><path d="M905.80 268V288M919.40 268V288"/><path d="M923.70 268V288M1136.40 268V288"/><path d="M1136.80 268V288M1173.20 268V288"/><path d="M1173.60 268V288M1180.40 268V288"/><path d="M1186.20 268V288M1404.20 268V288"/><path d="M1404.60 268V288M1427.10 268V288"/><path d="M1427.50 268V288M1440.00 268V288"/><path d="M1442.60 268V288M1484.00 268V288"/><path d="M1484.40 268V288M1488.70 268V288"/><path d="M1490.70 268V288M1527.00 268V288"/><path d="M1529.60 268V288M1557.80 268V288"/><path d="M1180.80 208V228M1183.80 208V228"/><path d="M7.50 288V308M342.30 288V308"/><path d="M342.70 288V308M543.20 288V308"/><path d="M543.60 288V308M559.60 288V308"/><path d="M560.00 288V308M571.30 288V308"/><path d="M574.80 288V308M836.30 288V308"/><path d="M836.70 288V308M863.40 288V308"/><path d="M863.80 288V308M869.20 288V308"/><path d="M871.70 288V308M903.00 288V308"/><path d="M905.80 288V308M918.30 288V308"/><path d="M923.70 288V308M1110.20 288V308"/><path d="M1110.60 288V308M1123.40 288V308"/><path d="M1125.70 288V308M1133.20 288V308"/><path d="M1136.80 288V308M1172.50 288V308"/><path d="M1173.60 288V308M1180.40 288V308"/><path d="M1186.20 288V308M1396.40 288V308"/><path d="M1396.80 288V308M1402.20 288V308"/><path d="M1404.60 288V308M1424.20 288V308"/><path d="M1427.50 288V308M1439.80 288V308"/><path d="M1442.60 288V308M1474.50 288V308"/><path d="M1474.90 288V308M1482.30 288V308"/><path d="M1490.70 288V308M1526.10 288V308"/><path d="M1529.60 288V308M1557.80 288V308"/><path d="M7.50 308V328M340.80 308V328"/><path d="M342.70 308V328M529.60 308V328"/><path d="M530.00 308V328M537.20 308V328"/><path d="M537.60 308V328M543.20 308V328"/><path d="M543.60 308V328M555.20 308V328"/><path d="M555.60 308V328M559.60 308V328"/><path d="M560.00 308V328M570.80 308V328"/><path d="M574.80 308V328M835.20 308V328"/><path d="M836.70 308V328M857.50 308V328"/><path d="M863.80 308V328M868.50 308V328"/><path d="M871.70 308V328M901.50 308V328"/><path d="M905.80 308V328M918.30 308V328"/><path d="M923.70 308V328M1110.20 308V328"/><path d="M1110.60 308V328M1118.50 308V328"/><path d="M1125.70 308V328M1133.20 308V328"/><path d="M1136.80 308V328M1168.80 308V328"/><path d="M1173.60 308V328M1180.40 308V328"/><path d="M1186.20 308V328M1395.80 308V328"/><path d="M1404.60 308V328M1422.80 308V328"/><path d="M1427.50 308V328M1439.80 308V328"/><path d="M1442.60 308V328M1474.50 308V328"/><path d="M1474.90 308V328M1479.60 308V328"/><path d="M1490.70 308V328M1526.10 308V328"/><path d="M1529.60 308V328M1557.80 308V328"/><path d="M7.50 328V348M218.10 328V348"/><path d="M218.50 328V348M339.60 328V348"/><path d="M342.70 328V348M529.60 328V348"/><path d="M530.00 328V348M534.50 328V348"/><path d="M537.60 328V348M540.80 328V348"/><path d="M543.60 328V348M556.30 328V348"/><path d="M556.70 328V348M559.60 328V348"/><path d="M560.00 328V348M570.20 328V348"/><path d="M574.80 328V348M833.30 328V348"/><path d="M836.70 328V348M857.50 328V348"/><path d="M863.80 328V348M868.50 328V348"/><path d="M871.70 328V348M898.30 328V348"/><path d="M905.80 328V348M918.30 328V348"/><path d="M923.70 328V348M1107.20 328V348"/><path d="M1110.60 328V348M1118.50 328V348"/><path d="M1125.70 328V348M1128.90 328V348"/><path d="M1136.80 328V348M1166.60 328V348"/><path d="M1173.60 328V348M1180.40 328V348"/><path d="M1186.20 328V348M1394.60 328V348"/><path d="M1404.60 328V348M1421.30 328V348"/><path d="M1427.50 328V348M1439.80 328V348"/><path d="M1442.60 328V348M1474.50 328V348"/><path d="M1474.90 328V348M1477.40 328V348"/><path d="M1490.70 328V348M1512.60 328V348"/><path d="M1513.00 328V348M1517.80 328V348"/><path d="M1518.20 328V348M1522.20 328V348"/><path d="M1529.60 328V348M1534.40 328V348"/><path d="M7.50 348V368M218.10 348V368"/><path d="M218.50 348V368M338.80 348V368"/><path d="M342.70 348V368M439.30 348V368"/><path d="M439.70 348V368M469.80 348V368"/><path d="M470.20 348V368M529.60 348V368"/><path d="M531.20 348V368M535.70 348V368"/><path d="M539.80 348V368M543.20 348V368"/><path d="M543.60 348V368M556.30 348V368"/><path d="M556.70 348V368M559.60 348V368"/><path d="M560.00 348V368M564.30 348V368"/><path d="M564.70 348V368M568.70 348V368"/><path d="M574.80 348V368M675.80 348V368"/><path d="M676.20 348V368M714.80 348V368"/><path d="M715.20 348V368M793.30 348V368"/><path d="M793.70 348V368M815.80 348V368"/><path d="M816.20 348V368M832.60 348V368"/><path d="M836.70 348V368M857.50 348V368"/><path d="M863.80 348V368M867.50 348V368"/><path d="M871.70 348V368M890.50 348V368"/><path d="M905.80 348V368M918.30 348V368"/><path d="M923.70 348V368M991.20 348V368"/><path d="M991.60 348V368M1054.30 348V368"/><path d="M1054.70 348V368M1081.90 348V368"/><path d="M1082.30 348V368M1095.30 348V368"/><path d="M1095.70 348V368M1106.50 348V368"/><path d="M1110.60 348V368M1116.00 348V368"/><path d="M1125.70 348V368M1128.90 348V368"/><path d="M1136.80 348V368M1162.20 348V368"/><path d="M1173.60 348V368M1180.40 348V368"/><path d="M1186.20 348V368M1262.30 348V368"/><path d="M1262.70 348V368M1338.80 348V368"/><path d="M1339.20 348V368M1364.80 348V368"/><path d="M1365.20 348V368M1381.10 348V368"/><path d="M1381.50 348V368M1394.30 348V368"/><path d="M1404.60 348V368M1416.30 348V368"/><path d="M1427.50 348V368M1439.80 348V368"/><path d="M1442.60 348V368M1456.20 348V368"/><path d="M1456.60 348V368M1465.80 348V368"/><path d="M1469.00 348V368M1471.60 348V368"/><path d="M1474.90 348V368M1477.40 348V368"/><path d="M1490.70 348V368M1512.60 348V368"/><path d="M1513.00 348V368M1517.80 348V368"/><path d="M1529.60 348V368M1535.30 348V368"/><path d="M7.50 368V388M136.40 368V388"/><path d="M136.80 368V388M194.50 368V388"/><path d="M194.90 368V388M207.80 368V388"/><path d="M208.20 368V388M216.10 368V388"/><path d="M218.50 368V388M296.40 368V388"/><path d="M296.80 368V388M335.50 368V388"/><path d="M335.90 368V388M338.80 368V388"/><path d="M342.70 368V388M348.10 368V388"/><path d="M348.50 368V388M438.30 368V388"/><path d="M439.70 368V388M467.80 368V388"/><path d="M470.20 368V388M529.60 368V388"/><path d="M531.20 368V388M535.70 368V388"/><path d="M536.10 368V388M539.40 368V388"/><path d="M539.80 368V388M543.20 368V388"/><path d="M543.60 368V388M554.80 368V388"/><path d="M560.00 368V388M564.30 368V388"/><path d="M574.80 368V388M675.80 368V388"/><path d="M676.20 368V388M690.30 368V388"/><path d="M690.70 368V388M700.80 368V388"/><path d="M701.20 368V388M714.80 368V388"/><path d="M715.20 368V388M788.10 368V388"/><path d="M788.50 368V388M793.30 368V388"/><path d="M793.70 368V388M815.80 368V388"/><path d="M816.20 368V388M832.60 368V388"/><path d="M836.70 368V388M853.10 368V388"/><path d="M871.70 368V388M878.30 368V388"/><path d="M880.70 368V388M884.60 368V388"/><path d="M905.80 368V388M916.80 368V388"/><path d="M923.70 368V388M991.20 368V388"/><path d="M1054.70 368V388M1062.50 368V388"/><path d="M1062.90 368V388M1073.50 368V388"/><path d="M1073.90 368V388M1081.90 368V388"/><path d="M1082.30 368V388M1095.30 368V388"/><path d="M1095.70 368V388M1106.50 368V388"/><path d="M1110.60 368V388M1116.00 368V388"/><path d="M1125.70 368V388M1128.90 368V388"/><path d="M1136.80 368V388M1151.20 368V388"/><path d="M1151.60 368V388M1155.60 368V388"/><path d="M1173.60 368V388M1180.40 368V388"/><path d="M1186.20 368V388M1256.10 368V388"/><path d="M1256.50 368V388M1262.30 368V388"/><path d="M1262.70 368V388M1338.80 368V388"/><path d="M1339.20 368V388M1344.20 368V388"/><path d="M1344.60 368V388M1354.80 368V388"/><path d="M1355.20 368V388M1364.80 368V388"/><path d="M1365.20 368V388M1381.10 368V388"/><path d="M1381.50 368V388M1394.30 368V388"/><path d="M1404.60 368V388M1407.80 368V388"/><path d="M1427.50 368V388M1439.80 368V388"/><path d="M1442.60 368V388M1456.20 368V388"/><path d="M1456.60 368V388M1464.30 368V388"/><path d="M1467.60 368V388M1470.10 368V388"/><path d="M1490.70 368V388M1513.30 368V388"/><path d="M1529.60 368V388M1535.30 368V388"/></g>
<g fill="none" stroke="#f6736e" stroke-opacity="0.83" stroke-width="0.7"><path d="M919.65 209V227M921.15 209V227"/><path d="M1483.35 289V307M1485.15 289V307"/><path d="M1485.45 289V307M1487.55 289V307"/><path d="M1479.85 309V327M1482.15 309V327"/><path d="M1482.85 309V327M1484.35 309V327"/><path d="M1485.05 309V327M1487.15 309V327"/><path d="M534.75 329V347M537.35 329V347"/><path d="M541.05 329V347M543.35 329V347"/><path d="M1129.15 329V347M1130.85 329V347"/><path d="M1478.25 329V347M1479.75 329V347"/><path d="M1480.65 329V347M1482.45 329V347"/><path d="M1534.65 329V347M1536.55 329V347"/><path d="M529.35 349V367M530.95 349V367"/><path d="M535.95 349V367M537.35 349V367"/><path d="M537.45 349V367M539.55 349V367"/><path d="M1129.15 349V367M1130.35 349V367"/><path d="M1466.05 349V367M1468.75 349V367"/><path d="M1471.85 349V367M1473.95 349V367"/><path d="M1478.25 349V367M1479.75 349V367"/><path d="M1480.65 349V367M1482.45 349V367"/><path d="M216.35 369V387M218.25 369V387"/><path d="M529.35 369V387M530.95 369V387"/><path d="M564.55 369V387M566.65 369V387"/><path d="M566.75 369V387M568.85 369V387"/><path d="M853.35 369V387M855.45 369V387"/><path d="M855.55 369V387M857.65 369V387"/><path d="M878.55 369V387M880.45 369V387"/><path d="M1047.85 369V387M1050.15 369V387"/><path d="M1129.15 369V387M1130.35 369V387"/><path d="M1408.05 369V387M1410.15 369V387"/><path d="M1410.25 369V387M1412.65 369V387"/><path d="M1465.05 369V387M1466.55 369V387"/><path d="M1474.05 369V387M1476.15 369V387"/><path d="M1477.65 369V387M1479.75 369V387"/><path d="M1481.35 369V387M1482.45 369V387"/></g>
<rect x="992.10" y="369.00" width="55.00" height="18" fill="#4a2a2a" stroke="#ffffff" stroke-width="2"/>
</svg>
<div class="fl" style="left:0.0px;top:-9px;width:1551.0px;letter-spacing:-0.203px">__scrt_common_main_seh</div>
<div class="fl" style="left:0.0px;top:11px;width:1551.0px;letter-spacing:0.248px">main</div>
<div class="fl" style="left:0.0px;top:31px;width:1551.0px;letter-spacing:0.013px">std::rt::lang_start_internal</div>
<div class="fl" style="left:0.0px;top:51px;width:1551.0px;letter-spacing:0.099px">core::ops::function::FnOnce::call_once&lt;std::rt::lang_start::closure_env$0&lt;tuple$&lt;&gt; &gt;,tuple$&lt;&gt; &gt;</div>
<div class="fl" style="left:0.0px;top:71px;width:1551.0px;letter-spacing:0.011px">std::sys_common::backtrace::__rust_begin_short_backtrace&lt;void (*)(),tuple$&lt;&gt; &gt;</div>
<div class="fl" style="left:0.0px;top:91px;width:1551.0px;letter-spacing:-0.061px">km_db::main</div>
<div class="fl" style="left:0.0px;top:111px;width:1551.0px;letter-spacing:-0.036px">km_db::infos::kms_info</div>
<div class="fl tr" style="left:0.0px;top:131px;width:567.6px;letter-spacing:0.057px">diesel::sqlite::connection::impl$3::execute_returning_count&lt;diesel::query_builder::insert_statem...</div>
<div class="fl tr" style="left:0.0px;top:146px;width:567.6px;height:5px">ent::InsertStatement&lt;diesel::table,diesel::query_builder::ValuesClause&lt;diesel::ColumnInsertValue&gt; &gt;</div>
<div class="fl" style="left:567.6px;top:131px;width:348.9px;letter-spacing:-0.123px">km_db::infos::sde::Sde::get_group_id</div>
<div class="fl" style="left:916.5px;top:131px;width:262.5px;letter-spacing:-0.066px">km_db::infos::sde::Sde::get_attribute_value</div>
<div class="fl" style="left:1179.0px;top:131px;width:256.2px;letter-spacing:-0.089px">km_db::infos::sde::Sde::get_category_id</div>
<div class="fl" style="left:0.0px;top:151px;width:565.8px;letter-spacing:0.003px">diesel::sqlite::connection::stmt::StatementUse::run</div>
<div class="fl" style="left:567.6px;top:151px;width:296.9px;letter-spacing:-0.056px">rusqlite::row::Rows::next</div>
<div class="fl" style="left:916.5px;top:151px;width:213.1px;letter-spacing:-0.056px">rusqlite::row::Rows::next</div>
<div class="fl" style="left:1179.0px;top:151px;width:218.4px;letter-spacing:-0.056px">rusqlite::row::Rows::next</div>
<div class="fl" style="left:0.0px;top:171px;width:565.8px;letter-spacing:0.011px">sqlite3_step</div>
<div class="fl" style="left:567.6px;top:171px;width:296.9px;letter-spacing:0.011px">sqlite3_step</div>
<div class="fl" style="left:916.5px;top:171px;width:213.1px;letter-spacing:0.011px">sqlite3_step</div>
<div class="fl" style="left:1179.0px;top:171px;width:218.4px;letter-spacing:0.011px">sqlite3_step</div>
<div class="fl" style="left:0.0px;top:191px;width:565.8px;letter-spacing:0.032px">sqlite3Step</div>
<div class="fl" style="left:567.6px;top:191px;width:296.9px;letter-spacing:0.032px">sqlite3Step</div>
<div class="fl" style="left:916.5px;top:191px;width:213.1px;letter-spacing:0.032px">sqlite3Step</div>
<div class="fl" style="left:1179.0px;top:191px;width:218.4px;letter-spacing:0.032px">sqlite3Step</div>
<div class="fl" style="left:0.0px;top:211px;width:565.8px;letter-spacing:-0.058px">sqlite3VdbeExec</div>
<div class="fl" style="left:567.6px;top:211px;width:296.9px;letter-spacing:-0.058px">sqlite3VdbeExec</div>
<div class="fl" style="left:916.5px;top:211px;width:213.1px;letter-spacing:-0.058px">sqlite3VdbeExec</div>
<div class="fl" style="left:1179.0px;top:211px;width:218.4px;letter-spacing:-0.058px">sqlite3VdbeExec</div>
<div class="fl" style="left:0.0px;top:231px;width:335.5px;letter-spacing:0.124px">sqlite3VdbeHalt</div>
<div class="fl" style="left:335.5px;top:231px;width:200.9px;letter-spacing:0.090px">sqlite3BtreeInsert</div>
<div class="fl" style="left:567.6px;top:231px;width:261.9px;letter-spacing:-0.052px">btreeBeginTrans</div>
<div class="fl" style="left:916.5px;top:231px;width:186.9px;letter-spacing:-0.052px">btreeBeginTrans</div>
<div class="fl" style="left:1179.0px;top:231px;width:210.6px;letter-spacing:-0.052px">btreeBeginTrans</div>
<div class="fl" style="left:0.0px;top:251px;width:334.0px;letter-spacing:0.305px">vdbeCommit</div>
<div class="fl" style="left:335.5px;top:251px;width:187.3px;letter-spacing:-0.099px">insertCellFast</div>
<div class="fl" style="left:567.6px;top:251px;width:260.8px;letter-spacing:-0.023px">lockBtree</div>
<div class="fl" style="left:916.5px;top:251px;width:186.9px;letter-spacing:-0.023px">lockBtree</div>
<div class="fl" style="left:1179.0px;top:251px;width:210.0px;letter-spacing:-0.023px">lockBtree</div>
<div class="fl" style="left:0.0px;top:271px;width:211.3px;letter-spacing:0.026px">sqlite3BtreeCommitPhaseOne</div>
<div class="fl tr" style="left:211.3px;top:271px;width:121.5px;letter-spacing:-0.010px">sqlite3BtreeCom...</div>
<div class="fl" style="left:335.5px;top:271px;width:187.3px;letter-spacing:0.031px">pager_write</div>
<div class="fl" style="left:567.6px;top:271px;width:258.9px;letter-spacing:-0.061px">sqlite3PagerSharedLock</div>
<div class="fl" style="left:916.5px;top:271px;width:183.9px;letter-spacing:-0.061px">sqlite3PagerSharedLock</div>
<div class="fl" style="left:1179.0px;top:271px;width:208.8px;letter-spacing:-0.061px">sqlite3PagerSharedLock</div>
<div class="fl" style="left:0.0px;top:291px;width:211.3px;letter-spacing:0.002px">sqlite3PagerCommitPhaseOne</div>
<div class="fl tr" style="left:211.3px;top:291px;width:120.7px;letter-spacing:-0.129px">pager_end_trans...</div>
<div class="fl" style="left:335.5px;top:291px;width:97.0px;letter-spacing:0.130px">winOpen</div>
<div class="fl" style="left:567.6px;top:291px;width:101.4px;letter-spacing:0.006px">hasHotJournal</div>
<div class="fl" style="left:0.0px;top:311px;width:129.6px;letter-spacing:-0.059px">syncJournal</div>
<div class="fl tr" style="left:341.3px;top:311px;width:90.2px;letter-spacing:-0.156px">kernelbase....</div>
<div class="fl" style="left:567.6px;top:311px;width:101.4px;letter-spacing:-0.180px">winAccess</div>
</div>
<div class="abs sbar" style="left:1540px;top:57px;width:19px;height:324px"></div>
<svg class="abs" style="left:1544.5px;top:62.5px" width="10" height="5.5" viewBox="0 0 10 5.5"><path d="M0 5.5 L5 0 L10 5.5 Z" fill="#999"/></svg>
<div class="abs thumb" style="left:1544px;top:111px;width:11px;height:149px"></div>
<svg class="abs" style="left:1544.5px;top:370px" width="10" height="5.5" viewBox="0 0 10 5.5"><path d="M0 0 L5 5.5 L10 0 Z" fill="#999"/></svg>

<div id="split" class="abs"></div>
<div id="pathbar" class="abs"><span>C:\MyCode\tranquility_news\km_db\src\infos\mod.rs:27</span></div>
<div id="margin" class="abs"></div>
<div id="curline" class="abs"></div>
<div class="hl1" style="top:460px;width:215.9px"></div><div class="hl1" style="top:511px;width:314.9px"></div><div class="hl2" style="top:579px;width:383.5px"></div><div class="hl2" style="top:613px;width:398.7px"></div>
<div class="vl" style="top:441px;height:37px"></div><div class="vl" style="top:492px;height:37px"></div><div class="vl" style="top:543px;height:19px"></div><div class="hl" style="top:561px"></div><div class="vl" style="top:577px;height:70px"></div><div class="hl" style="top:595px"></div><div class="hl" style="top:629px"></div><div class="hl" style="top:646px"></div><div class="vl" style="top:696px;height:20px"></div>
<div class="chev" style="top:432px"><svg width="10" height="6" viewBox="0 0 10 6"><path d="M0.6 0.6 L5 5 L9.4 0.6" fill="none" stroke="#d8d8d8" stroke-width="1.25"/></svg></div><div class="chev" style="top:483px"><svg width="10" height="6" viewBox="0 0 10 6"><path d="M0.6 0.6 L5 5 L9.4 0.6" fill="none" stroke="#d8d8d8" stroke-width="1.25"/></svg></div><div class="chev" style="top:534px"><svg width="10" height="6" viewBox="0 0 10 6"><path d="M0.6 0.6 L5 5 L9.4 0.6" fill="none" stroke="#d8d8d8" stroke-width="1.25"/></svg></div><div class="chev" style="top:568px"><svg width="10" height="6" viewBox="0 0 10 6"><path d="M0.6 0.6 L5 5 L9.4 0.6" fill="none" stroke="#d8d8d8" stroke-width="1.25"/></svg></div><div class="chev" style="top:687px"><svg width="10" height="6" viewBox="0 0 10 6"><path d="M0.6 0.6 L5 5 L9.4 0.6" fill="none" stroke="#d8d8d8" stroke-width="1.25"/></svg></div>
<div class="ln" style="top:409px">26</div><div class="cd" style="top:409px"></div><div class="ln cur" style="top:426px">27</div><div class="cd" style="top:426px"><span class="k">pub</span> <span class="k">fn</span> <span class="f">kms_info</span>(conn: <span class="g">&amp;</span><span class="k">mut</span> SqliteConnection) {</div><div class="ln" style="top:443px">28</div><div class="cd" style="top:443px">    <span class="k">let</span> <span class="k">mut</span> sde = Sde<span class="g">::</span><span class="f">new</span>().<span class="f">unwrap</span>();</div><div class="ln" style="top:460px">29</div><div class="cd" style="top:460px">    <span class="k">let</span> kms = <span class="f">get_kms</span>(conn);</div><div class="mt" style="top:460px">47 (0.78%)</div><div class="ln" style="top:477px">30</div><div class="cd" style="top:477px">    <span class="k">for</span> km <span class="k">in</span> kms {</div><div class="ln" style="top:494px">31</div><div class="cd" style="top:494px">        <span class="k">let</span> km_id = km.<span class="f">unwrap</span>();</div><div class="ln" style="top:511px">32</div><div class="cd" style="top:511px">        <span class="k">let</span> is_npc = <span class="f">is_npc</span>(conn, km_id);</div><div class="mt" style="top:511px">207 (3.45%)</div><div class="ln" style="top:528px">33</div><div class="cd" style="top:528px">        <span class="k">let</span> points = <span class="k">if</span> is_npc {</div><div class="ln" style="top:545px">34</div><div class="cd" style="top:545px">            <span class="n">1</span></div><div class="ln" style="top:562px">35</div><div class="cd" style="top:562px">        } <span class="k">else</span> {</div><div class="ln" style="top:579px">36</div><div class="cd" style="top:579px">            <span class="f">get_kill_points</span>(conn, <span class="g">&amp;</span><span class="k">mut</span> sde, km_id)</div><div class="mt" style="top:579px">3552 (59.15%)</div><div class="ln" style="top:596px">37</div><div class="cd" style="top:596px">        };</div><div class="ln" style="top:613px">38</div><div class="cd" style="top:613px">        <span class="f">insert_km_info</span>(conn, km_id, points, is_npc);</div><div class="mt" style="top:613px">2195 (36.55%)</div><div class="ln" style="top:630px">39</div><div class="cd" style="top:630px">    }</div><div class="ln" style="top:647px">40</div><div class="cd" style="top:647px">}</div><div class="ln" style="top:664px">41</div><div class="cd" style="top:664px"></div><div class="ln" style="top:681px">42</div><div class="cd" style="top:681px"><span class="k">fn</span> <span class="f">get_kms</span>(conn: <span class="g">&amp;</span><span class="k">mut</span> SqliteConnection) -&gt; Vec&lt;Option&lt;<span class="k">i32</span>&gt;&gt; {</div><div class="ln" style="top:698px">43</div><div class="cd" style="top:698px">    <span class="k">use</span> <span class="k">crate</span><span class="g">::</span>schema<span class="g">::</span>Killmails<span class="g">::</span>dsl<span class="g">::</span>*;</div>
<div class="abs sbar" style="left:1540px;top:409px;width:19px;height:307px"></div>
<svg class="abs" style="left:1544.5px;top:414.8px" width="10" height="5.5" viewBox="0 0 10 5.5"><path d="M0 5.5 L5 0 L10 5.5 Z" fill="#999"/></svg>
<div class="abs" style="left:1540px;top:460px;width:19px;height:3px;background:#e6e6e6"></div>
<div class="abs thumb" style="left:1544px;top:463px;width:11px;height:23px"></div>
<svg class="abs" style="left:1544.5px;top:706px" width="10" height="5.5" viewBox="0 0 10 5.5"><path d="M0 0 L5 5.5 L10 0 Z" fill="#999"/></svg>
</body></html>
